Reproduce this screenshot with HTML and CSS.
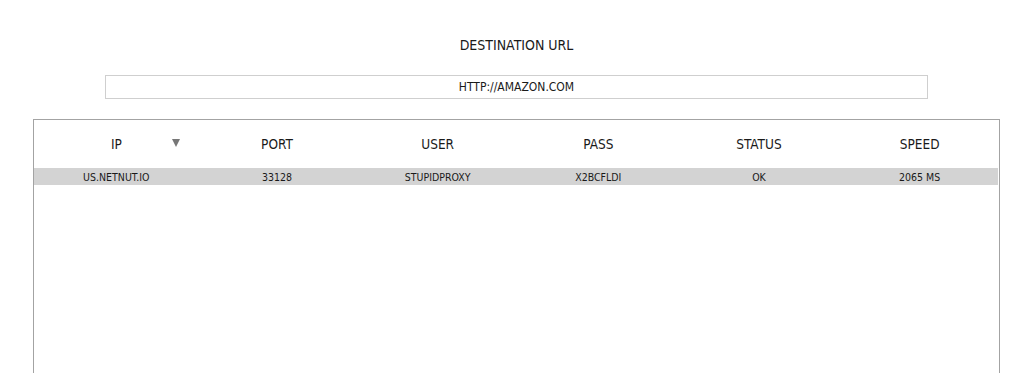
FILE: index.html
```html
<!DOCTYPE html>
<html lang="en">
<head>
	<meta charset="UTF-8">
	<title>Proxy Checker</title>
	<link rel="stylesheet" href="styles.css">
</head>
<body>
	<div class="page">
		<h2 class="title">DESTINATION URL</h2>
		<div class="url-box">HTTP://AMAZON.COM</div>
		<div class="grid-box">
			<table class="grid">
				<thead>
					<tr>
						<th class="sorted">IP<span class="arrow"></span></th>
						<th>PORT</th>
						<th>USER</th>
						<th>PASS</th>
						<th>STATUS</th>
						<th>SPEED</th>
					</tr>
				</thead>
				<tbody>
					<tr>
						<td>US.NETNUT.IO</td>
						<td>33128</td>
						<td>STUPIDPROXY</td>
						<td>X2BCFLDI</td>
						<td>OK</td>
						<td>2065 MS</td>
					</tr>
				</tbody>
			</table>
		</div>
	</div>
</body>
</html>
```
FILE: styles.css
```css
* {margin: 0;padding: 0;box-sizing: border-box;}
html, body {height: 100%;background: #fff;overflow: hidden;}
body {font-family: "Liberation Sans Narrow", "DejaVu Sans Condensed", "Liberation Sans", sans-serif;color: #1a1a1a;}
.page {display: flex;flex-direction: column;width: 967px;height: 100%;margin-left: 33px;padding-top: 36px;}
.title {font-size: 14px;font-weight: normal;line-height: 18px;text-align: center;}
.url-box {width: 823px;height: 24px;margin: 21px 0 0 72px;border: 1px solid #cfcfcf;font-size: 12px;line-height: 22px;text-align: center;}
.grid-box {flex: 1;margin-top: 20px;padding-right: 1px;border: 1px solid #a3a3a3;border-bottom: none;}
.grid {width: 100%;border-collapse: collapse;table-layout: fixed;}
.grid th, .grid td {padding-left: 4px;text-align: center;}
.grid th {height: 48px;font-size: 13.5px;font-weight: normal;}
.grid th.sorted {position: relative;}
.grid .arrow {position: absolute;right: 15px;top: 19px;width: 0;height: 0;border-left: 4px solid transparent;border-right: 4px solid transparent;border-top: 8px solid #777;}
.grid tbody tr {background: #d3d3d3;}
.grid td {height: 17px;font-size: 10.5px;}
```
